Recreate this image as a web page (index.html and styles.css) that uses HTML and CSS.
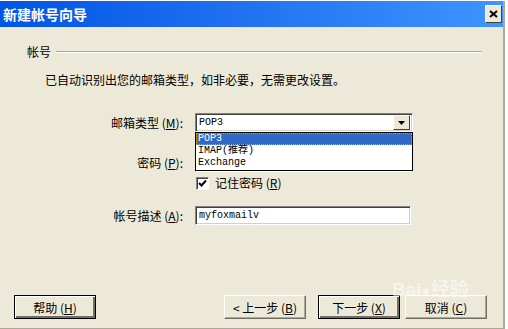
FILE: index.html
```html
<!DOCTYPE html>
<html lang="zh-CN">
<head>
    <meta charset="UTF-8">
    <title>新建帐号向导</title>
    <link rel="stylesheet" href="styles.css">
</head>
<body>
    <div class="janela">
        <div class="titulo">
            <span class="titulo-texto">新建帐号向导</span>
            <button class="fechar">
                <svg width="9" height="8" viewBox="0 0 9 8"><path d="M1 1L8 7M8 1L1 7" stroke="#000" stroke-width="2"/></svg>
            </button>
        </div>
        <div class="conteudo">
            <div class="grupo">
                <span>帐号</span>
                <div class="linha"></div>
            </div>
            <p class="descricao">已自动识别出您的邮箱类型，如非必要，无需更改设置。</p>

            <div class="form">
                <label class="rotulo r1">邮箱类型 (<u>M</u>):</label>
                <div class="combo r1">
                    <span class="valor">POP3</span>
                    <span class="seta"><svg width="7" height="4" viewBox="0 0 7 4"><path d="M0 0H7L3.5 4Z" fill="#000"/></svg></span>
                    <ul class="lista">
                        <li class="ativo">POP3</li>
                        <li>IMAP(推荐)</li>
                        <li>Exchange</li>
                    </ul>
                </div>

                <label class="rotulo r2">密码 (<u>P</u>):</label>
                <div class="campo r2"></div>

                <div class="check r3">
                    <span class="caixa"><svg width="9" height="9" viewBox="0 0 9 9"><path d="M1 4L3.5 6.5L8 1.5" stroke="#000" stroke-width="2" fill="none"/></svg></span>
                    <span>记住密码 (<u>R</u>)</span>
                </div>

                <label class="rotulo r4">帐号描述 (<u>A</u>):</label>
                <div class="campo r4"><span class="valor">myfoxmailv</span></div>
            </div>

            <div class="botoes">
                <button class="btn padrao">帮助 (<u>H</u>)</button>
                <div class="espaco"></div>
                <button class="btn">&lt; 上一步 (<u>B</u>)</button>
                <button class="btn padrao prox">下一步 (<u>X</u>)</button>
                <button class="btn canc">取消 (<u>C</u>)</button>
                <div class="marca">Bai<span class="pata">●</span>经验</div>
            </div>
        </div>
    </div>
</body>
</html>
```

FILE: styles.css
```css
*{
    margin: 0;
    padding: 0;
    box-sizing: border-box;
}
body{
    background-color: #ffffff;
    font-family: "Noto Sans CJK SC", "Liberation Sans", sans-serif;
    font-size: 12px;
    color: #000;
}
.janela{
    width: 505px;
    height: 328px;
    margin-top: 1px;
    background-color: #ece9d8;
    border-right: 2px solid #aca899;
    border-bottom: 1px solid #aca899;
    display: flex;
    flex-direction: column;
}
.titulo{
    height: 26px;
    background: linear-gradient(to right, #0055e5 0%, #1f6ff0 45%, #3d95ff 100%);
    display: flex;
    align-items: center;
    padding-left: 3px;
    padding-right: 1px;
}
.titulo-texto{
    color: #fff;
    font-weight: bold;
    font-size: 14px;
    flex: 1;
    line-height: 14px;
}
.fechar{
    width: 17px;
    height: 18px;
    background-color: #ece9d8;
    border: 1px solid;
    border-color: #fff #404040 #404040 #fff;
    display: flex;
    align-items: center;
    justify-content: center;
}
.conteudo{
    flex: 1;
    display: flex;
    flex-direction: column;
    padding: 18px 0 9px 0;
}
.grupo{
    display: flex;
    align-items: center;
    height: 14px;
    padding-left: 27px;
    padding-right: 21px;
}
.grupo span{
    line-height: 14px;
}
.linha{
    flex: 1;
    margin-left: 5px;
    border-top: 1px solid #aca899;
    border-bottom: 1px solid #fff;
}
.descricao{
    margin-top: 14px;
    padding-left: 45px;
    line-height: 14px;
}
.form{
    margin-top: 26px;
    display: grid;
    grid-template-columns: 183px 218px;
    grid-template-rows: 19px 19px 14px 19px;
    column-gap: 12px;
}
.r1{ grid-row: 1; }
.r2{ grid-row: 2; margin-top: 21px; }
.r3{ grid-row: 3; margin-top: 32px; }
.r4{ grid-row: 4; margin-top: 41px; }
.rotulo{
    grid-column: 1;
    text-align: right;
    line-height: 19px;
}
.rotulo u, .check u, .btn u{
    text-decoration: underline;
}
.combo, .campo{
    grid-column: 2;
    height: 19px;
    background-color: #fff;
    border: 1px solid;
    border-color: #848284 #fff #fff #848284;
    box-shadow: inset 1px 1px 0 #404040, inset -1px -1px 0 #d4d0c8;
    position: relative;
    display: flex;
    align-items: center;
}
.campo{
    width: 216px;
}
.valor{
    font-family: "Liberation Mono", monospace;
    font-size: 10px;
    padding-left: 3px;
    flex: 1;
}
.seta{
    width: 17px;
    height: 15px;
    margin-right: 2px;
    background-color: #ece9d8;
    border: 1px solid;
    border-color: #fff #404040 #404040 #fff;
    display: flex;
    align-items: center;
    justify-content: center;
}
.lista{
    list-style: none;
    position: absolute;
    top: 18px;
    left: -1px;
    width: 218px;
    background-color: #fff;
    border: 1px solid #000;
    padding: 0 0 1px 0;
    z-index: 2;
}
.lista li{
    font-family: "Liberation Mono", "Noto Sans CJK SC", monospace;
    font-size: 10px;
    line-height: 12px;
    height: 12px;
    padding-left: 2px;
}
.lista li.ativo{
    background-color: #316ac5;
    color: #fff;
    outline: 1px dotted #e8a000;
    outline-offset: -1px;
}
.check{
    grid-column: 2;
    display: flex;
    align-items: center;
    gap: 6px;
    line-height: 14px;
    padding-left: 1px;
}
.caixa{
    width: 13px;
    height: 13px;
    background-color: #fff;
    border: 1px solid;
    border-color: #848284 #fff #fff #848284;
    box-shadow: inset 1px 1px 0 #404040;
    display: flex;
    align-items: center;
    justify-content: center;
}
.botoes{
    margin-top: auto;
    display: flex;
    padding-left: 14px;
    padding-right: 16px;
    position: relative;
}
.espaco{
    flex: 1;
}
.btn{
    width: 82px;
    height: 24px;
    font-family: "Noto Sans CJK SC", "Liberation Sans", sans-serif;
    font-size: 12px;
    background-color: #ece9d8;
    border: 1px solid;
    border-color: #fff #716f64 #716f64 #fff;
    box-shadow: inset -1px -1px 0 #aca899;
}
.btn.padrao{
    border: 1px solid #000;
    box-shadow: inset 1px 1px 0 #fff, inset -2px -2px 0 #716f64;
}
.prox{
    margin-left: 12px;
}
.canc{
    margin-left: 5px;
}
/* marca d'agua */
.marca{
    position: absolute;
    left: 392px;
    top: -16px;
    font-family: "Liberation Sans", "Noto Sans CJK SC", sans-serif;
    font-size: 19px;
    font-weight: bold;
    line-height: 21px;
    color: rgba(255, 255, 255, 0.55);
    pointer-events: none;
}
.pata{
    font-size: 15px;
}
```
